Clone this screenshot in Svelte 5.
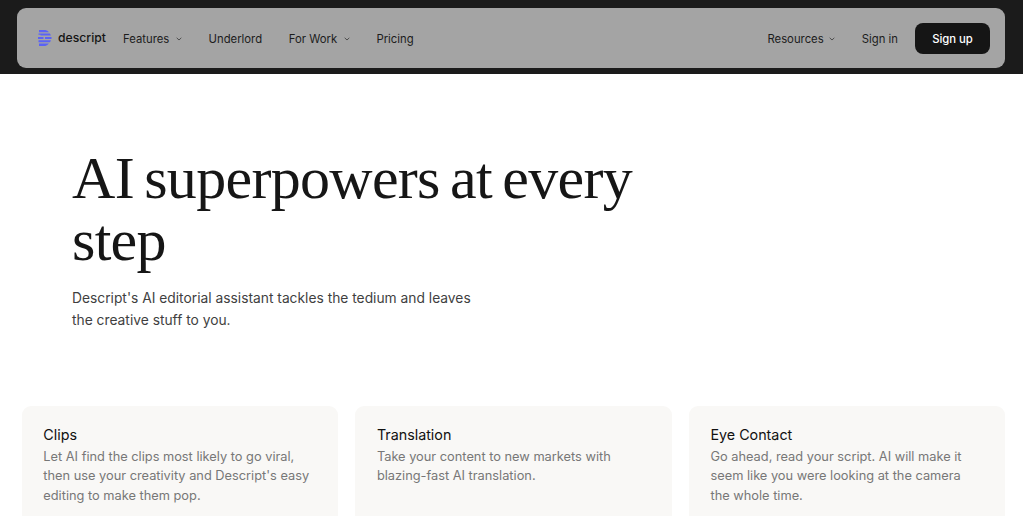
<script>
  const left = [
    { label: 'Features', menu: true },
    { label: 'Underlord', menu: false },
    { label: 'For Work', menu: true },
    { label: 'Pricing', menu: false }
  ];
  const cards = [
    { title: 'Clips', text: "Let AI find the clips most likely to go viral, then use your creativity and Descript's easy editing to make them pop." },
    { title: 'Translation', text: 'Take your content to new markets with blazing-fast AI translation.' },
    { title: 'Eye Contact', text: 'Go ahead, read your script. AI will make it seem like you were looking at the camera the whole time.' }
  ];
</script>

<div class="page">
  <header class="topbar">
    <nav class="nav">
      <a class="logo" href="#top">
        <svg width="14" height="16" viewBox="0 0 14 16" aria-hidden="true">
          <g fill="#5a62f6">
            <path d="M1 0h6.300a5.500 5.500 0 0 1 3.700 2.200H1z"/>
            <path d="M.5 3.400h11.300c.5.600.9 1.300 1.100 2H2.500v-.6H.5z"/>
            <path d="M0 6.900h5.500v2H0zM7 6.900h6.500v2H7z"/>
            <path d="M.5 10.200h12.400c-.2.800-.6 1.500-1.100 2.100H.5z"/>
            <path d="M1 13.600h9.900A5.500 5.500 0 0 1 7.300 16H1z"/>
          </g>
        </svg>
        <span>descript</span>
      </a>
      <ul class="links">
        {#each left as item}
          <li>
            {item.label}
            {#if item.menu}
              <svg class="chev" width="6" height="4" viewBox="0 0 6 4"><path d="M.7.8 3 3l2.300-2.200" fill="none" stroke="#444" stroke-width=".9"/></svg>
            {/if}
          </li>
        {/each}
      </ul>
      <div class="right">
        <span class="res">Resources <svg class="chev" width="6" height="4" viewBox="0 0 6 4"><path d="M.7.8 3 3l2.300-2.200" fill="none" stroke="#444" stroke-width=".9"/></svg></span>
        <span class="signin">Sign in</span>
        <span class="signup">Sign up</span>
      </div>
    </nav>
  </header>

  <section class="hero">
    <h1>AI superpowers at every step</h1>
    <p>Descript's AI editorial assistant tackles the tedium and leaves the creative stuff to you.</p>
  </section>

  <section class="cards">
    {#each cards as card}
      <article class="card">
        <h2>{card.title}</h2>
        <p>{card.text}</p>
      </article>
    {/each}
  </section>
</div>

<style>
  :global(body) { margin: 0; background: #fff; overflow: hidden; }
  .page { width: 1023px; height: 516px; overflow: hidden; font-family: Inter, "Liberation Sans", sans-serif; color: #1a1a1a; }
  .topbar { background: #1b1b1b; height: 74px; padding: 8px 18px 6px 17px; box-sizing: border-box; }
  .nav { height: 60px; background: #a4a4a4; border-radius: 9px; display: flex; align-items: center; padding: 0 15px 0 21px; font-size: 12px; color: #1c1c1c; }
  .logo { display: flex; align-items: center; gap: 6px; color: #141414; text-decoration: none; font-weight: 500; font-size: 12.200px; width: 85px; }
  .logo span { padding-bottom: 1px; }
  .links { display: flex; list-style: none; margin: 0; padding: 1px 0 0; gap: 26.700px; font-size: 11.300px; }
  .links li { display: flex; align-items: center; gap: 4.600px; }
  .chev { display: inline-block; margin-left: 2px; vertical-align: middle; }
  .links .chev { margin-left: 2px; }
  .right { margin-left: auto; display: flex; align-items: center; font-size: 11.300px; }
  .res, .signin { padding-top: 1px; }
  .signin { margin-left: 27px; }
  .signup { margin-left: 17px; width: 75px; height: 31px; display: flex; align-items: center; justify-content: center; box-sizing: border-box; background: #151515; color: #fff; border-radius: 8px; font-weight: 500; padding-top: 1px; }
  .hero { padding: 73px 0 0 72px; height: 332px; box-sizing: border-box; }
  h1 { margin: 0; width: 600px; font-family: "Liberation Serif", serif; font-weight: 400; font-size: 60px; line-height: 62px; letter-spacing: -0.700px; word-spacing: -4px; color: #161616; }
  .hero p { margin: 16px 0 0; width: 410px; font-size: 13.800px; line-height: 22px; color: #3f3f3f; }
  .cards { display: grid; grid-template-columns: repeat(3, 316.200px); column-gap: 17.400px; padding-left: 21.800px; }
  .card { background: #f9f8f6; border-radius: 9px; padding: 19px 26px 20px 21.500px; height: 130px; box-sizing: border-box; }
  h2 { margin: 0 0 1.800px; font-size: 14.300px; font-weight: 400; line-height: 20px; color: #111; }
  .card p { margin: 0; font-size: 12.800px; line-height: 19.500px; color: #777; }
</style>
